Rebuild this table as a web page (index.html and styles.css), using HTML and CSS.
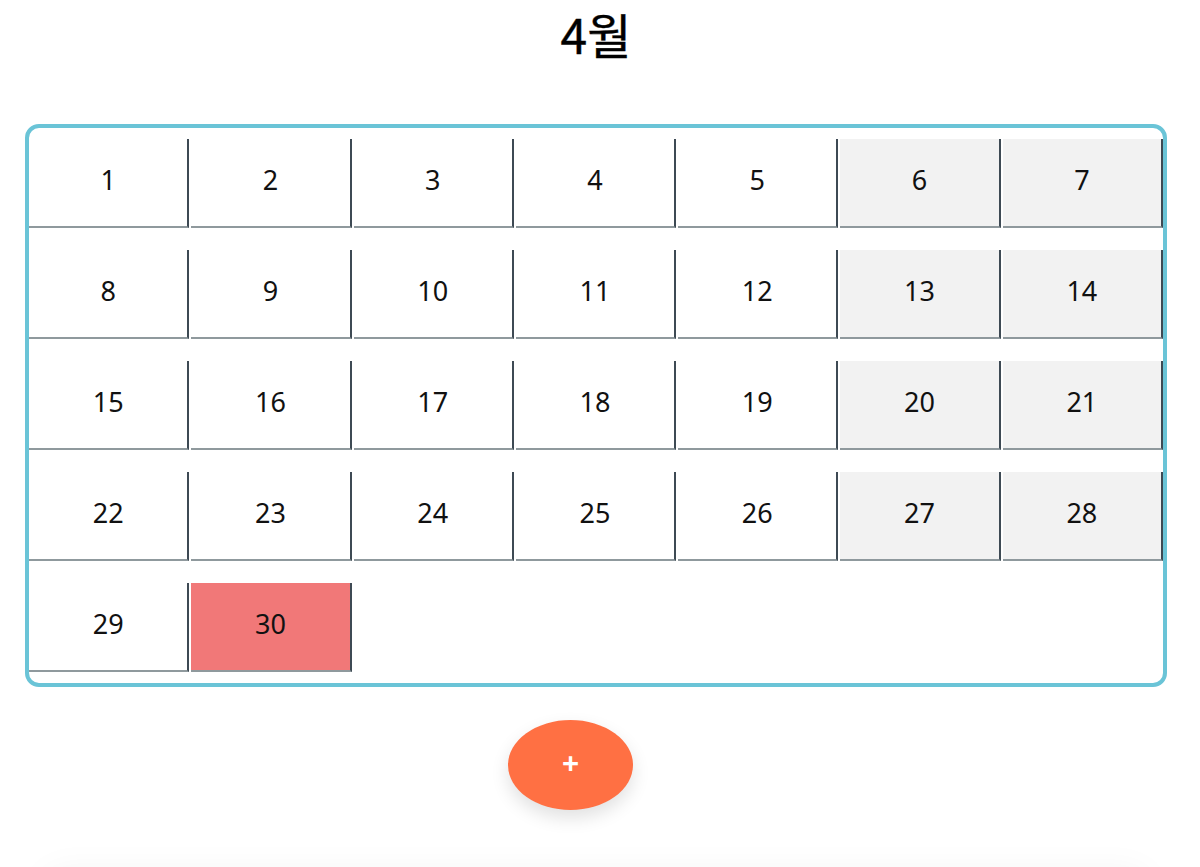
FILE: index.html
```html
<!DOCTYPE html>
<html lang="ko">
<head>
<meta charset="utf-8">
<title>4월</title>
<link rel="stylesheet" href="styles.css">
</head>
<body>
<div class="page">
  <h1 class="title">4월</h1>
  <div class="calendar">
    <div class="day">1</div><div class="day">2</div><div class="day">3</div><div class="day">4</div><div class="day">5</div><div class="day weekend">6</div><div class="day weekend">7</div>
    <div class="day">8</div><div class="day">9</div><div class="day">10</div><div class="day">11</div><div class="day">12</div><div class="day weekend">13</div><div class="day weekend">14</div>
    <div class="day">15</div><div class="day">16</div><div class="day">17</div><div class="day">18</div><div class="day">19</div><div class="day weekend">20</div><div class="day weekend">21</div>
    <div class="day">22</div><div class="day">23</div><div class="day">24</div><div class="day">25</div><div class="day">26</div><div class="day weekend">27</div><div class="day weekend">28</div>
    <div class="day">29</div><div class="day today">30</div>
  </div>
  <div class="actions">
    <button class="add-btn" type="button">+</button>
  </div>
  <div class="panel"></div>
</div>
</body>
</html>
```

FILE: styles.css
```css
html, body {
  margin: 0;
  padding: 0;
  background: #ffffff;
}

body {
  font-family: "Noto Sans", "Noto Sans CJK KR", sans-serif;
  color: #111111;
  overflow: hidden;
}

.page {
  padding: 0 33px 0 25px;
}

.title {
  margin: 0;
  height: 66px;
  line-height: 66px;
  text-align: center;
  font-family: "Noto Sans CJK KR", "Noto Sans", sans-serif;
  font-size: 48px;
  font-weight: 400;
  -webkit-text-stroke: 0.4px #000000;
  color: #000000;
}

.calendar {
  margin-top: 58px;
  border: 4px solid #6ac4d7;
  border-radius: 14px;
  padding: 11px 0;
  display: grid;
  grid-template-columns: repeat(7, 1fr);
  grid-auto-rows: 89px;
  column-gap: 2px;
  row-gap: 22px;
}

.day {
  box-sizing: border-box;
  border-right: 2px solid #3e4a54;
  border-bottom: 2px solid #8f999d;
  display: flex;
  align-items: center;
  justify-content: center;
  font-size: 27px;
  color: #111111;
  padding-bottom: 6px;
}

.weekend {
  background: #f2f2f2;
}

.today {
  background: #f17878;
}

.actions {
  display: flex;
  justify-content: center;
  padding-right: 51px;
  margin-top: 33px;
}

.add-btn {
  width: 125px;
  height: 90px;
  border: none;
  border-radius: 50%;
  background: #ff7043;
  color: #ffffff;
  font-family: "Noto Sans", sans-serif;
  font-size: 30px;
  font-weight: 700;
  line-height: 1;
  padding: 0 0 4px 0;
  box-shadow: 0 8px 18px rgba(0, 0, 0, 0.12);
}

.panel {
  margin: 62px 20px 0 20px;
  height: 120px;
  border-radius: 16px;
  box-shadow: 0 0 36px rgba(0, 0, 0, 0.05);
}
```
